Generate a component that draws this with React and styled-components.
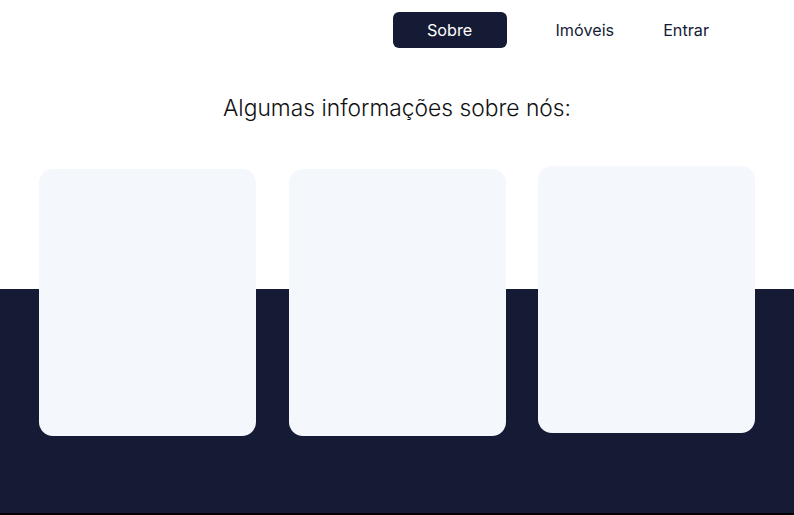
import React from "react";
import styled, { createGlobalStyle } from "styled-components";

const GlobalStyle = createGlobalStyle`
  html, body { margin: 0; padding: 0; background: #000; }
  body { font-family: Inter, "Noto Sans", sans-serif; }
  * { box-sizing: border-box; }
`;

const Page = styled.div`
  width: 794px;
  height: 513px;
  display: flex;
  flex-direction: column;
  background: #ffffff;
  overflow: hidden;
`;

const Header = styled.header`
  display: flex;
  justify-content: flex-end;
  align-items: center;
  gap: 49px;
  padding: 12px 85px 0 0;
  height: 48px;
`;

const NavItem = styled.a`
  display: flex;
  align-items: center;
  justify-content: center;
  font-size: 16.2px;
  color: #161b35;
  text-decoration: none;
  height: 36px;
  ${(p) =>
    p.$active &&
    `
    width: 114px;
    background: #161b35;
    color: #ffffff;
    border-radius: 6px;
  `}
`;

const Title = styled.h1`
  margin: 46px 0 0;
  font-size: 22.8px;
  line-height: 28px;
  font-weight: 300;
  text-align: center;
  color: #111111;
`;

const Section = styled.section`
  flex: 1;
  padding: 47px 0 0;
  background: linear-gradient(to bottom, #ffffff 0, #ffffff 167px, #161b35 167px, #161b35 100%);
`;

const Cards = styled.div`
  display: grid;
  grid-template-columns: repeat(3, 217px);
  column-gap: 32.5px;
  justify-content: center;
  align-items: start;
`;

const Card = styled.div`
  height: 267px;
  border-radius: 14px;
  background: #f4f8fd;
  transform: translateY(${(p) => (p.$lift ? "-3px" : "0")});
`;

export default function App() {
  return (
    <>
      <GlobalStyle />
      <Page>
        <Header>
          <NavItem $active>Sobre</NavItem>
          <NavItem>Imóveis</NavItem>
          <NavItem>Entrar</NavItem>
        </Header>
        <Title>Algumas informações sobre nós:</Title>
        <Section>
          <Cards>
            <Card />
            <Card />
            <Card $lift />
          </Cards>
        </Section>
      </Page>
    </>
  );
}
